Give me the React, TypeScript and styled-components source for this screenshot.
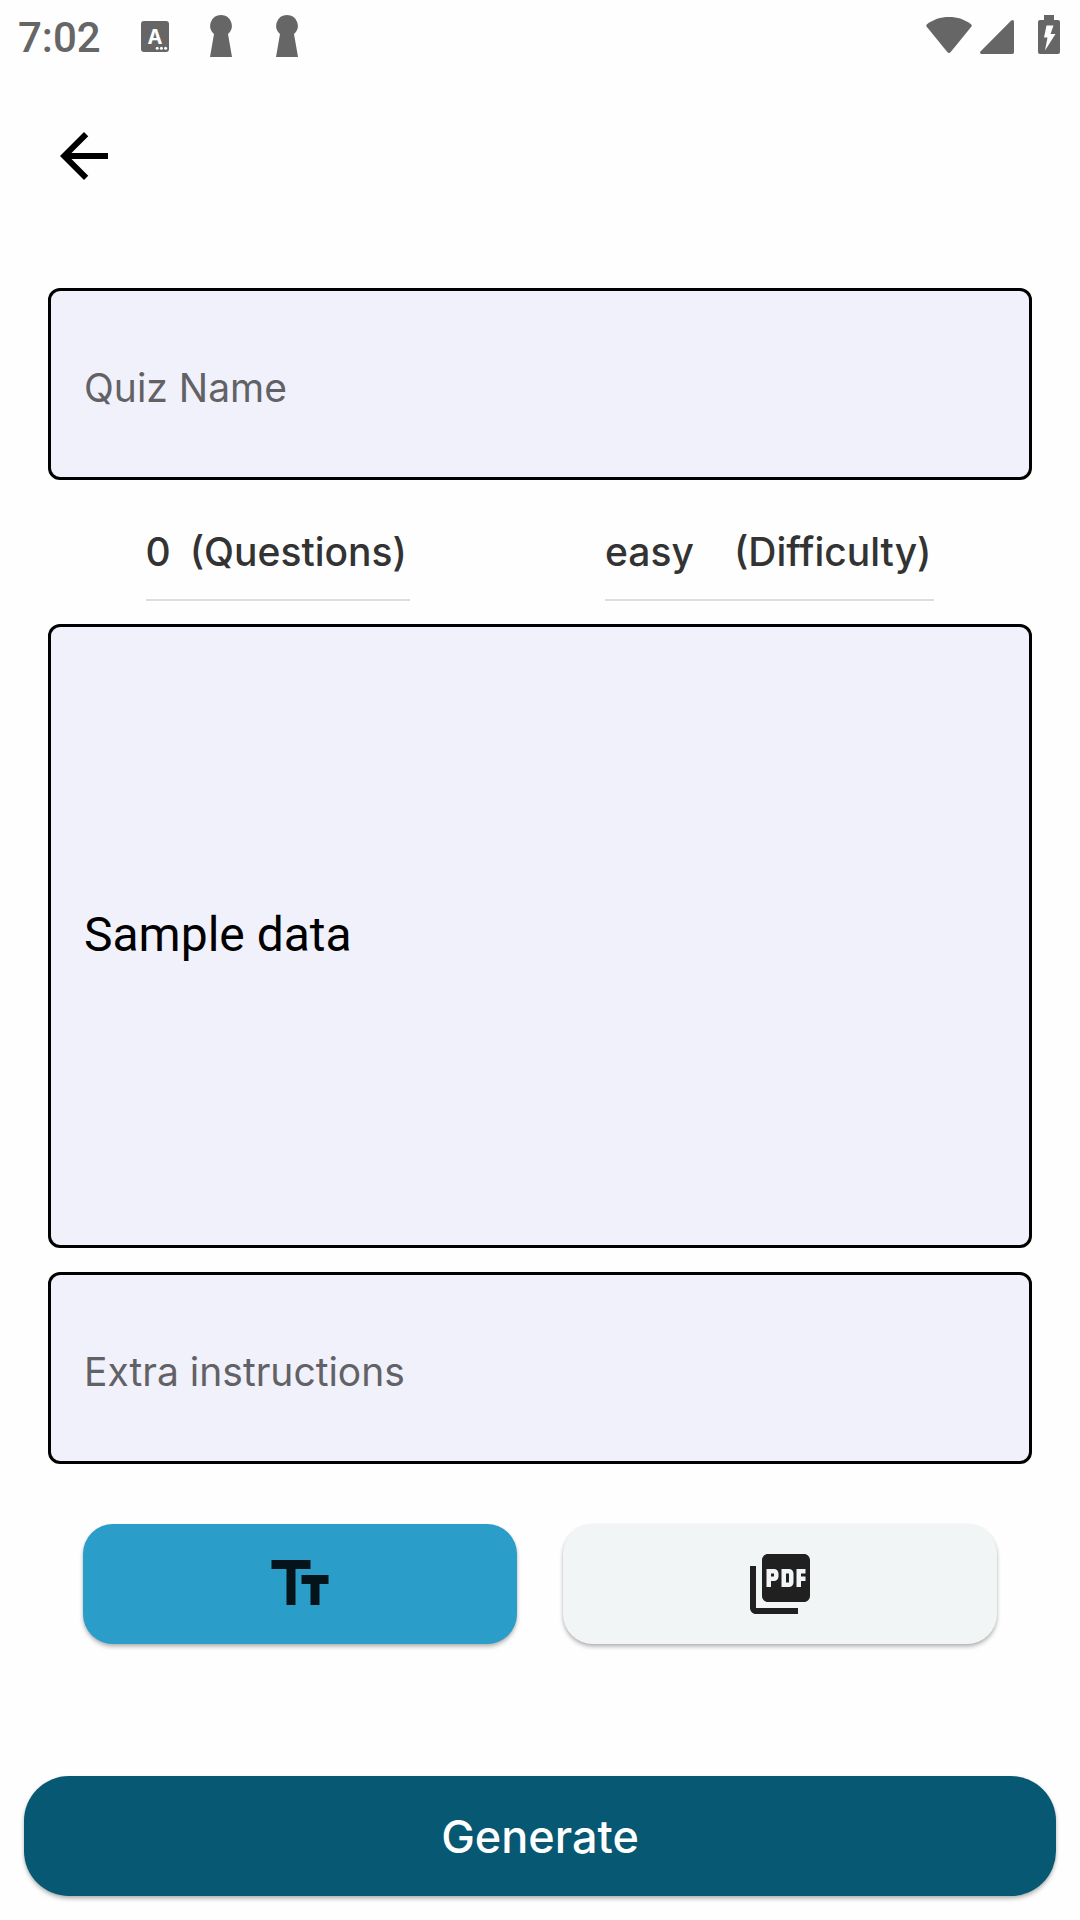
import React, { useState } from "react";
import styled, { createGlobalStyle } from "styled-components";
import { MdArrowBack, MdPictureAsPdf, MdTextFields } from "react-icons/md";

const GlobalStyle = createGlobalStyle`
  *, *::before, *::after { box-sizing: border-box; }
  body { margin: 0; background: #fefefe; }
  button, input, textarea, select { font: inherit; color: inherit; }
`;

const Screen = styled.div`
  min-height: 100vh;
  display: flex;
  flex-direction: column;
  background: #fefefe;
  color: #000;
  font-family: Inter, Roboto, sans-serif;
`;

const StatusBar = styled.div`
  height: 72px;
  padding: 0 20px 0 18px;
  display: flex;
  justify-content: space-between;
  align-items: center;
  color: #666;
`;

const StatusGroup = styled.div<{ $gap: number }>`
  display: flex;
  align-items: center;
  gap: ${({ $gap }) => $gap}px;
`;

const SystemGroup = styled(StatusGroup)`
  align-items: flex-end;
  padding-bottom: 3px;
`;

const SignalGroup = styled(StatusGroup)`
  align-items: flex-end;
`;

const Clock = styled.time`
  padding-top: 4px;
  font: 500 42px/48px Roboto, sans-serif;
`;

const AppBar = styled.header`
  height: 168px;
  padding: 0 12px;
  display: flex;
  align-items: center;
`;

const IconButton = styled.button`
  width: 144px;
  height: 144px;
  display: grid;
  place-items: center;
  padding: 0;
  border: 0;
  border-radius: 50%;
  background: none;
`;

const Form = styled.form`
  flex: 1;
  display: flex;
  flex-direction: column;
  padding: 48px 0 24px;
`;

const Fields = styled.div`
  flex: 1;
  display: flex;
  flex-direction: column;
  padding: 0 48px;
`;

const Field = styled.div<{ $grow?: boolean }>`
  flex: ${({ $grow }) => ($grow ? "1 0 auto" : "none")};
  min-height: 192px;
  display: flex;
  align-items: center;
  padding: ${({ $grow }) => ($grow ? "0 33px 2px" : "8px 33px 0")};
  border: 3px solid #000;
  border-radius: 12px;
  background: #f1f1fb;
`;

const TextInput = styled.input`
  width: 100%;
  padding: 0;
  border: 0;
  outline: 0;
  background: none;
  font-size: 39px;
  line-height: 60px;
  &::placeholder { color: #626266; opacity: 1; }
`;

const TextArea = styled.textarea`
  width: 100%;
  height: 60px;
  padding: 0;
  border: 0;
  outline: 0;
  resize: none;
  overflow: hidden;
  background: none;
  font: 400 48px/60px Roboto, sans-serif;
`;

const Pickers = styled.div`
  height: 144px;
  display: flex;
  justify-content: space-around;
  align-items: center;
`;

const Picker = styled.label<{ $gap: number }>`
  height: 98px;
  display: flex;
  align-items: center;
  gap: ${({ $gap }) => $gap}px;
  padding: 2px 3px 0 0;
  border-bottom: 2px solid #ddd;
  color: #333;
  font-size: 39px;
  font-weight: 500;
  line-height: 60px;
`;

const Select = styled.select`
  appearance: none;
  field-sizing: content;
  padding: 0;
  border: 0;
  outline: 0;
  background: none;
`;

const Sources = styled.div`
  display: grid;
  grid-template-columns: 1fr 1fr;
  gap: 46px;
  padding: 0 35px;
  margin-top: 60px;
`;

const Button = styled.button`
  height: 120px;
  display: grid;
  place-items: center;
  padding: 0;
  border: 0;
  box-shadow: 0 3px 4px rgba(0, 0, 0, 0.24), 0 1px 3px rgba(0, 0, 0, 0.1);
`;

const SourceButton = styled(Button)<{ $active: boolean }>`
  border-radius: 30px;
  background: ${({ $active }) => ($active ? "#2b9dc9" : "#f1f5f6")};
  color: rgba(0, 0, 0, 0.87);
`;

const SubmitButton = styled(Button)`
  margin: 132px 24px 0;
  padding-top: 2px;
  border-radius: 45px;
  background: #065873;
  color: #fff;
  font-size: 45px;
  font-weight: 500;
  line-height: 60px;
`;

const Spacer = styled.div`
  height: 24px;
`;

function LanguageIcon() {
  return (
    <svg width="28" height="31" viewBox="0 0 28 31" aria-hidden="true">
      <rect width="28" height="31" rx="3" fill="currentColor" />
      <text x="14" y="22.5" textAnchor="middle" fontFamily="Inter, sans-serif" fontSize="20" fontWeight="700" fill="#fefefe">A</text>
      <g fill="#fefefe">
        <circle cx="16.2" cy="27.2" r="1.5" />
        <circle cx="20.4" cy="27.2" r="1.5" />
        <circle cx="24.6" cy="27.2" r="1.5" />
      </g>
    </svg>
  );
}

function KeyholeIcon() {
  return (
    <svg width="22" height="42" viewBox="0 0 22 42" aria-hidden="true">
      <path d="M11 0a10.8 10.8 0 0 1 7 19L22 42H0L4 19A10.8 10.8 0 0 1 11 0z" fill="currentColor" />
    </svg>
  );
}

function WifiIcon() {
  return (
    <svg width="46" height="37" viewBox="0 0 46 37" aria-hidden="true">
      <path d="M1 7.2C7 2.6 14.500 0 23 0s16 2.600 22 7.200q1.300 1.200.3 2.600L24.500 35.200q-1.500 1.400-3 0L.7 9.800Q-.3 8.400 1 7.200z" fill="currentColor" />
    </svg>
  );
}

function SignalIcon() {
  return (
    <svg width="34" height="34" viewBox="0 0 34 34" aria-hidden="true">
      <path d="M31 .7q3-1.700 3 1.500v30q0 1.800-1.800 1.800H1.500q-2.500-.5-.8-2.700z" fill="currentColor" />
    </svg>
  );
}

function BatteryIcon() {
  return (
    <svg width="22" height="39" viewBox="0 0 22 39" aria-hidden="true">
      <path d="M6 0h10v5h4q2 0 2 2v30q0 2-2 2H2q-2 0-2-2V7q0-2 2-2h4z" fill="currentColor" />
      <path d="M8.500 10.500h7l-3 8.500h5L7 35.500 9.500 22.500H6z" fill="#fefefe" />
    </svg>
  );
}

export default function App() {
  const [source, setSource] = useState<"text" | "pdf">("text");
  return (
    <Screen>
      <GlobalStyle />
      <StatusBar>
        <StatusGroup $gap={40}>
          <Clock>7:02</Clock>
          <StatusGroup $gap={44}>
            <StatusGroup $gap={41}>
              <LanguageIcon />
              <KeyholeIcon />
            </StatusGroup>
            <KeyholeIcon />
          </StatusGroup>
        </StatusGroup>
        <SystemGroup $gap={24}>
          <SignalGroup $gap={8}>
            <WifiIcon />
            <SignalIcon />
          </SignalGroup>
          <BatteryIcon />
        </SystemGroup>
      </StatusBar>
      <AppBar>
        <IconButton type="button" aria-label="Back">
          <MdArrowBack size={72} />
        </IconButton>
      </AppBar>
      <Form onSubmit={(e) => e.preventDefault()}>
        <Fields>
          <Field>
            <TextInput aria-label="Quiz Name" placeholder="Quiz Name" />
          </Field>
          <Pickers>
            <Picker $gap={19}>
              <Select defaultValue="0">
                <option>0</option>
                <option>5</option>
              </Select>
              (Questions)
            </Picker>
            <Picker $gap={40}>
              <Select defaultValue="easy">
                <option>easy</option>
                <option>hard</option>
              </Select>
              (Difficulty)
            </Picker>
          </Pickers>
          <Field $grow>
            <TextArea aria-label="Quiz content" rows={1} defaultValue="Sample data" />
          </Field>
          <Spacer />
          <Field>
            <TextInput aria-label="Extra instructions" placeholder="Extra instructions" />
          </Field>
          <Sources>
            <SourceButton type="button" aria-label="Text" $active={source === "text"} onClick={() => setSource("text")}>
              <MdTextFields size={72} />
            </SourceButton>
            <SourceButton type="button" aria-label="PDF" $active={source === "pdf"} onClick={() => setSource("pdf")}>
              <MdPictureAsPdf size={72} />
            </SourceButton>
          </Sources>
        </Fields>
        <SubmitButton type="submit">Generate</SubmitButton>
      </Form>
    </Screen>
  );
}
